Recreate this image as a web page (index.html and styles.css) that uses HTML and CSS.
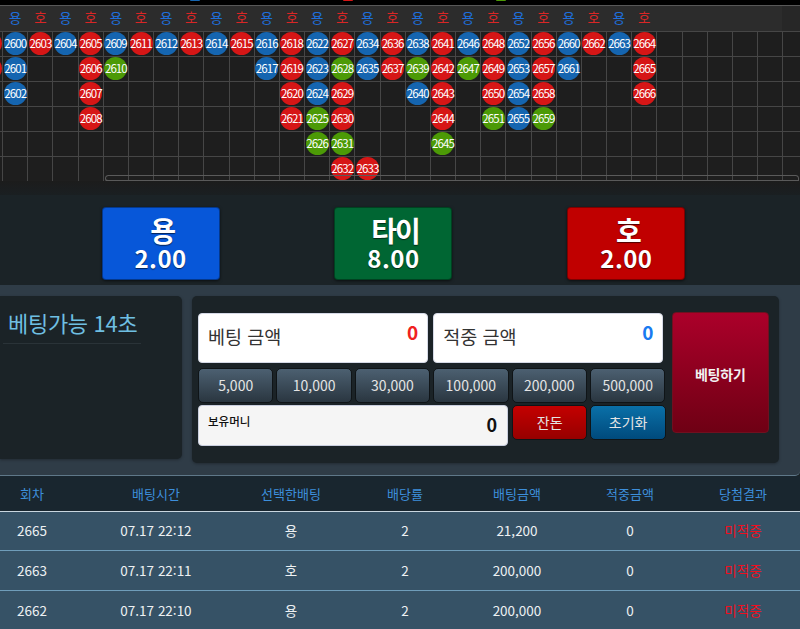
FILE: index.html
```html
<!DOCTYPE html>
<html lang="ko">
<head>
<meta charset="utf-8">
<title>베팅</title>
<link rel="stylesheet" href="styles.css">
</head>
<body>
<div class="topstrip"><i class="peek pb"></i><i class="peek pr"></i><i class="peek pg"></i></div>
<section class="board">
  <div class="heads">
    <span class="h y">용</span><span class="h o">호</span><span class="h y">용</span><span class="h o">호</span><span class="h y">용</span><span class="h o">호</span><span class="h y">용</span><span class="h o">호</span><span class="h y">용</span><span class="h o">호</span><span class="h y">용</span><span class="h o">호</span><span class="h y">용</span><span class="h o">호</span><span class="h y">용</span><span class="h o">호</span><span class="h y">용</span><span class="h o">호</span><span class="h y">용</span><span class="h o">호</span><span class="h y">용</span><span class="h o">호</span><span class="h y">용</span><span class="h o">호</span><span class="h y">용</span><span class="h o">호</span>
  </div>
  <div class="grid">
    <div class="col"><b class="r"></b><b class="r"></b></div>
    <div class="col"><b class="u">2600</b><b class="u">2601</b><b class="u">2602</b></div>
    <div class="col"><b class="r">2603</b></div>
    <div class="col"><b class="u">2604</b></div>
    <div class="col"><b class="r">2605</b><b class="r">2606</b><b class="r">2607</b><b class="r">2608</b></div>
    <div class="col"><b class="u">2609</b><b class="g">2610</b></div>
    <div class="col"><b class="r">2611</b></div>
    <div class="col"><b class="u">2612</b></div>
    <div class="col"><b class="r">2613</b></div>
    <div class="col"><b class="u">2614</b></div>
    <div class="col"><b class="r">2615</b></div>
    <div class="col"><b class="u">2616</b><b class="u">2617</b></div>
    <div class="col"><b class="r">2618</b><b class="r">2619</b><b class="r">2620</b><b class="r">2621</b></div>
    <div class="col"><b class="u">2622</b><b class="u">2623</b><b class="u">2624</b><b class="g">2625</b><b class="g">2626</b></div>
    <div class="col"><b class="r">2627</b><b class="g">2628</b><b class="r">2629</b><b class="r">2630</b><b class="g">2631</b><b class="r">2632</b></div>
    <div class="col"><b class="u">2634</b><b class="u">2635</b><b class="e"></b><b class="e"></b><b class="e"></b><b class="r">2633</b></div>
    <div class="col"><b class="r">2636</b><b class="r">2637</b></div>
    <div class="col"><b class="u">2638</b><b class="g">2639</b><b class="u">2640</b></div>
    <div class="col"><b class="r">2641</b><b class="r">2642</b><b class="r">2643</b><b class="r">2644</b><b class="g">2645</b></div>
    <div class="col"><b class="u">2646</b><b class="g">2647</b></div>
    <div class="col"><b class="r">2648</b><b class="r">2649</b><b class="r">2650</b><b class="g">2651</b></div>
    <div class="col"><b class="u">2652</b><b class="u">2653</b><b class="u">2654</b><b class="u">2655</b></div>
    <div class="col"><b class="r">2656</b><b class="r">2657</b><b class="r">2658</b><b class="g">2659</b></div>
    <div class="col"><b class="u">2660</b><b class="u">2661</b></div>
    <div class="col"><b class="r">2662</b></div>
    <div class="col"><b class="u">2663</b></div>
    <div class="col"><b class="r">2664</b><b class="r">2665</b><b class="r">2666</b></div>
  </div>
  <div class="thumb"></div>
</section>
<div class="gap"></div>
<section class="picks">
  <button class="pick blue"><span class="nm">용</span><span class="od">2.00</span></button>
  <button class="pick green"><span class="nm">타이</span><span class="od">8.00</span></button>
  <button class="pick red"><span class="nm">호</span><span class="od">2.00</span></button>
</section>
<section class="panel">
  <div class="timer"><div class="timer-t">베팅가능 14초</div></div>
  <div class="slip">
    <div class="slip-main">
      <div class="amounts">
        <div class="amt"><span class="lab">베팅 금액</span><span class="v vr">0</span></div>
        <div class="amt"><span class="lab">적중 금액</span><span class="v vb">0</span></div>
      </div>
      <div class="chips">
        <button class="chip">5,000</button><button class="chip">10,000</button><button class="chip">30,000</button><button class="chip">100,000</button><button class="chip">200,000</button><button class="chip">500,000</button>
      </div>
      <div class="bottom">
        <div class="money"><span class="m-l">보유머니</span><span class="m-v">0</span></div>
        <button class="chip act cr">잔돈</button>
        <button class="chip act cb">초기화</button>
      </div>
    </div>
    <button class="bet">베팅하기</button>
  </div>
</section>
<table class="hist">
  <colgroup><col class="w1"><col class="w2"><col class="w3"><col class="w4"><col class="w5"><col class="w6"><col class="w7"></colgroup>
  <thead><tr><th>회차</th><th>배팅시간</th><th>선택한배팅</th><th>배당률</th><th>배팅금액</th><th>적중금액</th><th>당첨결과</th></tr></thead>
  <tbody>
    <tr><td>2665</td><td>07.17 22:12</td><td>용</td><td>2</td><td>21,200</td><td>0</td><td class="miss">미적중</td></tr>
    <tr><td>2663</td><td>07.17 22:11</td><td>호</td><td>2</td><td>200,000</td><td>0</td><td class="miss">미적중</td></tr>
    <tr><td>2662</td><td>07.17 22:10</td><td>용</td><td>2</td><td>200,000</td><td>0</td><td class="miss">미적중</td></tr>
  </tbody>
</table>
</body>
</html>
```
FILE: styles.css
```css
* { box-sizing: border-box; }
html, body { margin: 0; padding: 0; }
body {
  width: 800px;
  height: 629px;
  overflow: hidden;
  background: #1b2327;
  font-family: "Noto Sans CJK KR", "Noto Sans", sans-serif;
  color: #fff;
}
button { font-family: inherit; padding: 0; cursor: pointer; }

.topstrip {
  height: 5px;
  background: #000;
  display: flex;
  gap: 143px;
  padding-left: 190px;
}
.peek { display: block; width: 10px; height: 1px; border-radius: 0 0 5px 5px; }
.pb { background: #1565b0; }
.pr { background: #d61616; }
.pg { background: #4c9a06; }

.board {
  position: relative;
  height: 176px;
  overflow: hidden;
  border-top: 1px solid #585858;
  background-color: #1e1e1e;
  background-image:
    repeating-linear-gradient(to right, #464646 0, #464646 1px, transparent 1px, transparent 25.17px),
    repeating-linear-gradient(to bottom, #464646 0, #464646 1px, transparent 1px, transparent 25.1px),
    linear-gradient(#272727, #272727);
  background-position: 2.4px 24.8px, 0 24.8px, 0 0;
  background-size: 100% 151px, 100% 151px, 100% 25px;
  background-repeat: no-repeat;
}
.heads {
  display: flex;
  height: 25px;
  width: 782px;
  padding-left: 2.67px;
  background: #2c2c2c;
}
.h {
  flex: 0 0 25.17px;
  text-align: center;
  font-size: 13.5px;
  line-height: 22px;
}
.h.y { color: #1f6fdc; }
.h.o { color: #d92626; }
.grid {
  display: flex;
  margin-left: -22.5px;
}
.col {
  flex: 0 0 25.17px;
  display: flex;
  flex-direction: column;
}
.col b {
  display: flex;
  align-items: center;
  justify-content: center;
  width: 23px;
  height: 23px;
  margin: 1px 1px 1.1px 1.1px;
  padding-bottom: 1px;
  border-radius: 50%;
  font-weight: 400;
  font-size: 11.5px;
  letter-spacing: -.9px;
  color: #fff;
  white-space: nowrap;
}
.col b.u { background: #1565b0; }
.col b.r { background: #d61616; }
.col b.g { background: #4c9a06; }
.col b.e { background: transparent; }
.thumb {
  position: absolute;
  left: 105px;
  right: 1px;
  top: 169px;
  height: 7px;
  border: 1px solid #5a5a5a;
  border-bottom-width: 2px;
  border-radius: 4px 4px 0 4px;
}

.gap {
  height: 14px;
  background: linear-gradient(#1c1c1c, #1a1f22);
}
.picks {
  height: 90px;
  padding: 12px 0 0 101.6px;
  display: flex;
  gap: 114.9px;
  background: #1b2327;
}
.pick {
  width: 118px;
  height: 73px;
  border: 1px solid rgba(0,0,0,.35);
  border-radius: 4px;
  color: #fff;
  display: flex;
  flex-direction: column;
  align-items: center;
  justify-content: center;
  text-shadow: 0 1px 1px rgba(0,0,0,.6);
  box-shadow: 0 1px 3px rgba(0,0,0,.6);
}
.pick.blue { background: #0757d9; }
.pick.green { background: #006633; }
.pick.red { background: #c00000; }
.nm { font-size: 28px; font-weight: 700; line-height: 31px; letter-spacing: -2px; padding-left: 3px; }
.od { font-size: 24px; font-weight: 700; line-height: 24px; letter-spacing: .5px; margin-bottom: 2px; }

.panel {
  height: 191px;
  background: #2f3c47;
  border-bottom: 1px solid #5f7889;
  border-bottom-right-radius: 5px;
  padding: 11px 21px 0 0;
  display: flex;
  gap: 10px;
}
.timer {
  width: 182px;
  height: 163px;
  background: #1b2327;
  border-radius: 0 5px 5px 0;
  padding: 11px 41px 0 3px;
  box-shadow: 0 1px 3px rgba(0,0,0,.3);
}
.timer-t {
  color: #6fbfe2;
  font-size: 22px;
  line-height: 30px;
  height: 37px;
  padding-left: 5px;
  border-bottom: 1px solid #2a3338;
  white-space: nowrap;
  letter-spacing: -.3px;
}
.slip {
  width: 587px;
  height: 167px;
  background: #1b2327;
  border-radius: 5px;
  padding: 17px 10px 0 6px;
  display: flex;
  gap: 7px;
  align-items: flex-start;
  box-shadow: 0 1px 3px rgba(0,0,0,.3);
}
.slip-main { width: 467px; }
.amounts { display: flex; gap: 5px; }
.amt {
  flex: 0 0 230.2px;
  height: 50px;
  background: #fff;
  border: 1px solid #d5d9e6;
  border-radius: 4px;
  display: flex;
  justify-content: space-between;
  padding: 0 9px;
  color: #333;
}
.lab { font-size: 18.5px; line-height: 44px; }
.v { font-size: 19px; font-weight: 700; line-height: 36px; }
.vr { color: #f02020; }
.vb { color: #1a7af0; }

.chips { display: flex; gap: 3px; margin-top: 5px; }
.chip {
  flex: 0 0 75.4px;
  height: 34.5px;
  border: 1px solid #0f1417;
  border-radius: 5px;
  background: linear-gradient(#4c6071, #2a3640);
  color: #e4e4e4;
  font-size: 14px;
  line-height: 1;
}
.bottom { display: flex; gap: 3px; margin-top: 2.5px; align-items: flex-start; }
.money {
  flex: 0 0 310px;
  height: 41px;
  margin-right: 1px;
  background: #f5f5f5;
  border: 1px solid #c9cede;
  border-radius: 4px;
  display: flex;
  justify-content: space-between;
  padding: 0 10px 0 9px;
  color: #111;
}
.m-l { font-size: 11.5px; font-weight: 500; line-height: 30px; }
.m-v { font-size: 18px; font-weight: 700; line-height: 37px; }
.cr { background: linear-gradient(#c40000, #960000); }
.cb { background: linear-gradient(#0a70a8, #004a7c); }
.bet {
  width: 96.5px;
  height: 121px;
  margin-top: -1px;
  border: 1px solid #70101f;
  border-radius: 4px;
  background: linear-gradient(#ab002a, #6f0014);
  color: #f2f2f2;
  font-size: 14px;
  font-weight: 700;
  letter-spacing: -.2px;
  padding-top: 2px;
}

.hist {
  width: 800px;
  table-layout: fixed;
  border-collapse: separate;
  border-spacing: 0;
}
.w1 { width: 64px; }
.w2 { width: 184px; }
.w3 { width: 86px; }
.w4 { width: 142px; }
.w5 { width: 82px; }
.w6 { width: 144px; }
.w7 { width: 98px; }
.hist th {
  height: 36px;
  background: #19262f;
  border-bottom: 1px solid #c9d6df;
  color: #3d8fdc;
  font-size: 13px;
  font-weight: 400;
  text-align: center;
  padding: 0 0 1px;
  white-space: nowrap;
}
.hist td {
  height: 40px;
  background: #365266;
  border-bottom: 1px solid #6f9dba;
  color: #eef1f3;
  font-size: 13.5px;
  text-align: center;
  padding: 0 0 1px;
  white-space: nowrap;
}
.hist tbody tr:first-child td { height: 39px; padding-bottom: 3px; }
.hist th:last-child, .hist td:last-child { padding-right: 16px; }
.hist td.miss { color: #f00f20; }
```
